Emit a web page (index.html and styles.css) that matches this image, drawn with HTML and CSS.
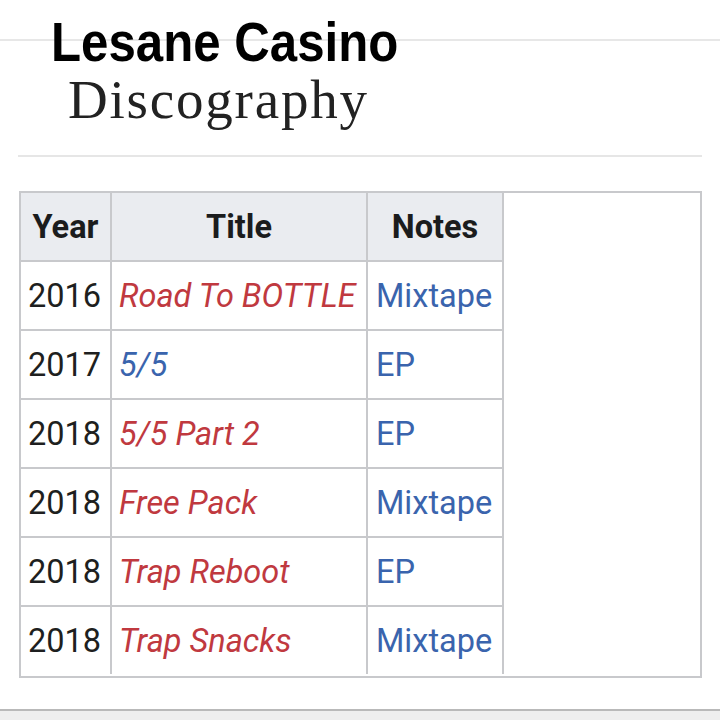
FILE: index.html
```html
<!DOCTYPE html>
<html>
<head>
<meta charset="utf-8">
<link rel="stylesheet" href="styles.css">
</head>
<body>
<div class="page">
  <header class="head">
    <h1 class="name">Lesane Casino</h1>
    <h2 class="section">Discography</h2>
  </header>
  <div class="divider"></div>
  <div class="table-box">
    <table class="disco">
      <colgroup>
        <col class="c-year">
        <col class="c-title">
        <col class="c-notes">
      </colgroup>
      <thead>
        <tr><th>Year</th><th>Title</th><th>Notes</th></tr>
      </thead>
      <tbody>
        <tr><td>2016</td><td class="t red">Road To BOTTLE</td><td class="blue">Mixtape</td></tr>
        <tr><td>2017</td><td class="t blue">5/5</td><td class="blue">EP</td></tr>
        <tr><td>2018</td><td class="t red">5/5 Part 2</td><td class="blue">EP</td></tr>
        <tr><td>2018</td><td class="t red">Free Pack</td><td class="blue">Mixtape</td></tr>
        <tr><td>2018</td><td class="t red">Trap Reboot</td><td class="blue">EP</td></tr>
        <tr class="last"><td>2018</td><td class="t red">Trap Snacks</td><td class="blue">Mixtape</td></tr>
      </tbody>
    </table>
  </div>
  <div class="footer-bar"></div>
</div>
</body>
</html>
```

FILE: styles.css
```css
html, body {
  margin: 0;
  padding: 0;
  background: #ffffff;
}

.page {
  width: 720px;
  height: 720px;
  overflow: hidden;
  font-family: Roboto, "Liberation Sans", sans-serif;
  color: #1e1f20;
}

.head {
  background: linear-gradient(#e7e7e7, #e7e7e7) no-repeat 0 39px / 100% 2px;
}

.name {
  margin: 0;
  padding: 12px 0 0 51px;
  font-family: "Liberation Sans", Arial, sans-serif;
  font-weight: 700;
  font-size: 55px;
  line-height: 60px;
  color: #000;
  transform: scaleX(0.895);
  transform-origin: 51px 0;
  white-space: nowrap;
}

.section {
  margin: 0;
  padding-left: 68px;
  font-family: "Liberation Serif", "Times New Roman", serif;
  font-weight: 400;
  font-size: 55px;
  line-height: 56px;
  letter-spacing: 1.8px;
  color: #222;
}

.divider {
  height: 2px;
  margin: 27px 18px 0 18px;
  background: #e6e6e6;
}

.table-box {
  margin: 34px 18px 0 19px;
  border: 2px solid #c8c9cc;
  height: 483px;
  box-sizing: content-box;
}

.disco {
  border-collapse: separate;
  border-spacing: 0;
  table-layout: fixed;
  width: 483px;
  font-size: 32.5px;
}

.c-year { width: 91px; }
.c-title { width: 256px; }
.c-notes { width: 136px; }

.disco th,
.disco td {
  height: 67px;
  padding: 0 0 0 8px;
  border-right: 2px solid #c8c9cc;
  border-bottom: 2px solid #c8c9cc;
  vertical-align: middle;
  white-space: nowrap;
  box-sizing: border-box;
}

.disco th {
  background: #eaecf0;
  font-weight: 700;
  text-align: center;
  padding: 0;
  height: 69px;
  color: #1b1c1d;
}

.disco td {
  height: 69px;
  text-align: left;
}

.disco td:first-child {
  padding-left: 7px;
}

.disco td.t {
  font-style: italic;
  padding-left: 7px;
}

.disco tr.last td {
  border-bottom: none;
  height: 67px;
}

.red { color: #c0393f; }
.blue { color: #3a64ad; }

.footer-bar {
  margin-top: 31px;
  border-top: 2px solid #b9b9b9;
  background: #eeeeee;
  height: 20px;
}
```
